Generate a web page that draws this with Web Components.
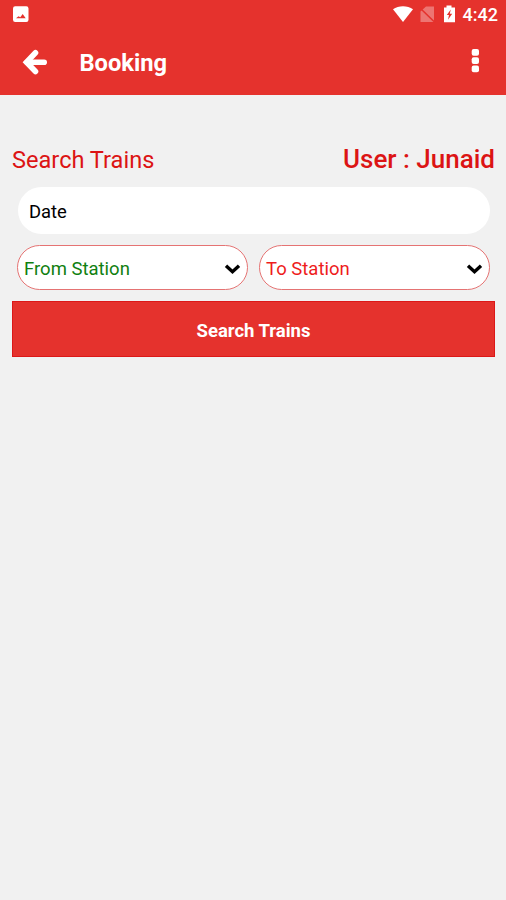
<!DOCTYPE html>
<html lang="en">
<head>
<meta charset="utf-8">
<title>Booking</title>
<style>
  html, body { margin: 0; height: 100%; background: #f1f1f1; font-family: Roboto, "Liberation Sans", sans-serif; }
</style>
</head>
<body>
<booking-screen></booking-screen>
<script>
  const define = (name, html) => customElements.define(name, class extends HTMLElement {
    constructor() {
      super();
      this.attachShadow({ mode: 'open' }).innerHTML = html;
    }
  });

  define('status-bar', `
    <style>
      :host { display: flex; align-items: flex-start; height: 29px; box-sizing: border-box; color: #fff; padding: 0 8px 0 13px; }
      svg { display: block; flex: none; }
      .gap { flex: 1; }
      .time { font-size: 18px; font-weight: 500; line-height: 30px; white-space: nowrap; }
    </style>
    <svg width="16" height="29" viewBox="0 0 16 29"><rect y="6.300" width="15.500" height="15.700" rx="2.200" fill="#fff"/><path d="M3 18.200l2.500-2 1.800 1 2.400-3.200 3 4.200z" fill="#e5322d"/></svg>
    <span class="gap"></span>
    <svg width="70" height="29" viewBox="0 0 70 29">
      <path d="M0 9.200C5.500 5.200 14.500 5.200 20 9.200L10 22z" fill="#fff"/>
      <path d="M27.500 11.500L33 6.500h8v15.500H27.500z" fill="#fff" fill-opacity=".33"/>
      <path d="M26.500 7.500L42 22.500" stroke="#e5322d" stroke-width="1.600"/>
      <path d="M53.500 5.500h5v2H62v14.700H51V7.500h2.500z" fill="#fff"/>
      <path d="M57.800 9.500L53.800 15h2.200l-1 4.800 4.200-6h-2.400z" fill="#e5322d"/>
    </svg>
    <span class="time"><slot></slot></span>`);

  define('app-bar', `
    <style>
      :host { display: flex; align-items: flex-start; height: 66px; box-sizing: border-box; color: #fff; padding: 0 24px 0 22px; }
      svg { display: block; flex: none; }
      h1 { margin: 0 0 0 31.500px; flex: 1; font-size: 23.700px; font-weight: 700; line-height: 68px; }
    </style>
    <svg width="26" height="66" viewBox="0 0 26 66" fill="none" stroke="#fff" stroke-width="5.600"><path d="M13.500 23.800L4.500 33.200l9 9.300" stroke-linecap="round" /><path d="M5 33.200h17.200" stroke-linecap="round"/></svg>
    <h1><slot></slot></h1>
    <svg width="14" height="66" viewBox="0 0 14 66" fill="#fff"><rect x="3.700" y="20" width="7.300" height="6.800" rx="2"/><rect x="3.700" y="28.200" width="7.300" height="6.800" rx="2"/><rect x="3.700" y="36.400" width="7.300" height="6.800" rx="2"/></svg>`);

  define('title-row', `
    <style>
      :host { display: flex; justify-content: space-between; align-items: flex-start; height: 45px; color: #dc1414; white-space: nowrap; }
      .title { font-size: 23.600px; line-height: 47px; }
      .user { font-size: 26px; font-weight: 500; line-height: 45px; }
    </style>
    <span class="title"><slot></slot></span><span class="user"><slot name="user"></slot></span>`);

  define('date-field', `
    <style>
      :host { display: block; height: 47px; margin: 0 5px 0 6px; box-sizing: border-box; border-radius: 24px; background: #fff; padding-left: 11px; font-size: 18.400px; line-height: 49px; color: #000; }
    </style><slot></slot>`);

  define('station-select', `
    <style>
      :host { display: flex; flex: 1; justify-content: space-between; align-items: center; height: 45px; box-sizing: border-box; border: 1px solid #e57373; border-radius: 23px; background: #fff; padding: 0 6px; font-size: 18.500px; color: var(--label); }
      svg { display: block; margin-top: 2px; }
      span { line-height: 45px; padding-top: 3px; }
    </style>
    <span><slot></slot></span>
    <svg width="17" height="12" viewBox="0 0 17 12" fill="none" stroke="#000" stroke-width="3.400"><path d="M2 2.700l6.500 6 6.500-6"/></svg>`);

  define('action-button', `
    <style>
      :host { display: block; height: 56px; box-sizing: border-box; border: 1px solid #dc1818; background: #e5322d; color: #fff; font-size: 18.500px; font-weight: 700; line-height: 58px; text-align: center; }
    </style><slot></slot>`);

  define('booking-screen', `
    <style>
      :host { display: block; min-height: 900px; background: #f1f1f1; }
      header { background: #e5322d; height: 95px; }
      main { padding: 42px 11px 0 12px; }
      title-row { margin-bottom: 5px; }
      .stations { display: flex; gap: 11px; margin: 11px 5px 11px 5px; }
      .from { --label: #108010; }
      .to { --label: #ee1c1c; }
    </style>
    <header>
      <status-bar>4:42</status-bar>
      <app-bar>Booking</app-bar>
    </header>
    <main>
      <title-row>Search Trains<span slot="user">User : Junaid</span></title-row>
      <date-field>Date</date-field>
      <div class="stations">
        <station-select class="from">From Station</station-select>
        <station-select class="to">To Station</station-select>
      </div>
      <action-button>Search Trains</action-button>
    </main>`);
</script>
</body>
</html>
